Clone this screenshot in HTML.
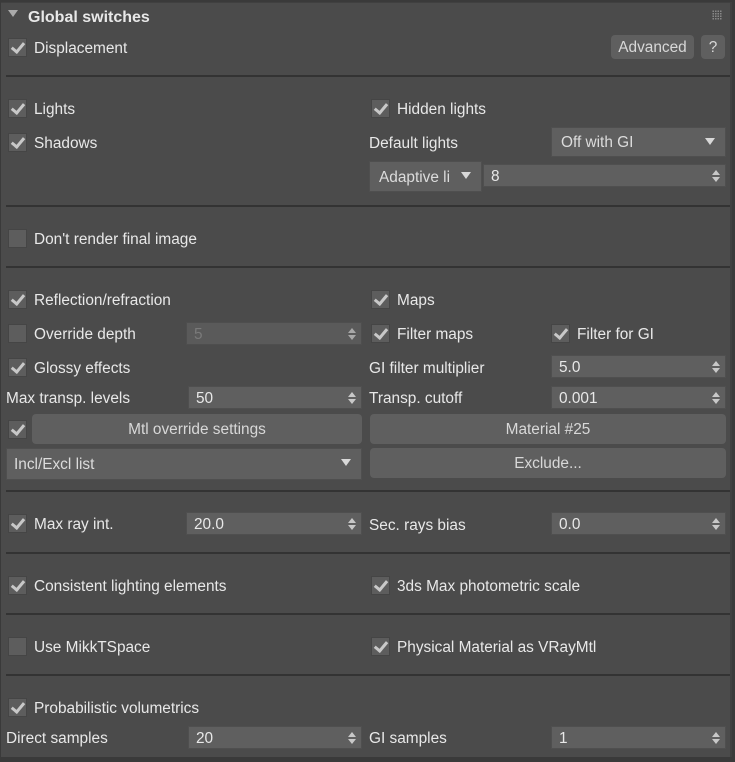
<!DOCTYPE html>
<html><head><meta charset="utf-8"><style>
*{box-sizing:border-box;margin:0;padding:0}
body{width:735px;height:762px;background:#3a3a3a;font-family:"Liberation Sans",sans-serif;font-size:15.4px;color:#e8e8e8;position:relative;overflow:hidden}
#p{position:absolute;left:1px;top:2px;width:731px;height:755px;background:#4b4b4b;border-top:1px solid #404040;border-right:2px solid #404040}
.a{position:absolute;white-space:nowrap;line-height:18px}
.t{position:absolute;white-space:nowrap;line-height:18px;margin-top:1px}
.cb{position:absolute;width:19px;height:19px;background:#5d5d5d;border:1px solid #454545}
.cb.c::after{content:"";position:absolute;left:5px;top:1px;width:5px;height:10px;border-right:3px solid #c8c8c8;border-bottom:3px solid #c8c8c8;transform:rotate(40deg)}
.sep{position:absolute;left:6px;width:724px;height:2px;background:#333}
.f{position:absolute;height:23px;background:#5f5f5f;border:1px solid #4f4f4f;padding-left:7px;padding-top:1px;line-height:21px}
.f.sp::after{content:"";position:absolute;right:5px;top:5px;width:0;height:0;border-left:4px solid transparent;border-right:4px solid transparent;border-bottom:5px solid #c8c8c8}
.f.sp::before{content:"";position:absolute;right:5px;top:12px;width:0;height:0;border-left:4px solid transparent;border-right:4px solid transparent;border-top:5px solid #c8c8c8}
.dd::after{content:"";position:absolute;right:10px;top:10px;border-left:5px solid transparent;border-right:5px solid transparent;border-top:7px solid #d8d8d8}
.b{position:absolute;background:#5f5f5f;border-radius:4px;text-align:center;color:#d8d8d8;padding-top:1px}
.dis{color:#8a8a8a}
</style></head><body>
<div id="p"></div>
<div class="a" style="left:8px;top:10px;width:0;height:0;border-left:5px solid transparent;border-right:5px solid transparent;border-top:7px solid #aaa"></div>
<div class="t" style="left:28px;top:8px;font-weight:bold;font-size:16px">Global switches</div>
<div class="a" style="left:712px;top:10px;width:10px;height:10px;background-image:radial-gradient(#888 40%,transparent 45%);background-size:2.5px 2.5px"></div>

<div class="cb c" style="left:8px;top:38px"></div><div class="t" style="left:34px;top:39px">Displacement</div>
<div class="b" style="left:611px;top:35px;width:83px;height:24px;line-height:24px">Advanced</div>
<div class="b" style="left:701px;top:35px;width:24px;height:24px;line-height:24px">?</div>
<div class="sep" style="top:75px"></div>

<div class="cb c" style="left:8px;top:99px"></div><div class="t" style="left:34px;top:100px">Lights</div>
<div class="cb c" style="left:371px;top:99px"></div><div class="t" style="left:397px;top:100px">Hidden lights</div>
<div class="cb c" style="left:8px;top:133px"></div><div class="t" style="left:34px;top:134px">Shadows</div>
<div class="t" style="left:369px;top:134px">Default lights</div>
<div class="f dd" style="left:551px;top:127px;width:175px;height:30px;line-height:28px;padding-left:9px;color:#dcdcdc">Off with GI</div>
<div class="f dd" style="left:369px;top:161px;width:113px;height:31px;line-height:29px;padding-left:9px;color:#dcdcdc">Adaptive li</div>
<div class="f sp" style="left:483px;top:164px;width:243px">8</div>
<div class="sep" style="top:205px"></div>

<div class="cb" style="left:8px;top:229px"></div><div class="t" style="left:34px;top:230px">Don't render final image</div>
<div class="sep" style="top:266px"></div>

<div class="cb c" style="left:8px;top:290px"></div><div class="t" style="left:34px;top:291px">Reflection/refraction</div>
<div class="cb c" style="left:371px;top:290px"></div><div class="t" style="left:397px;top:291px">Maps</div>
<div class="cb" style="left:8px;top:324px"></div><div class="t" style="left:34px;top:325px">Override depth</div>
<div class="f sp dis" style="left:186px;top:322px;width:176px;opacity:.75">5</div>
<div class="cb c" style="left:371px;top:324px"></div><div class="t" style="left:397px;top:325px">Filter maps</div>
<div class="cb c" style="left:551px;top:324px"></div><div class="t" style="left:577px;top:325px">Filter for GI</div>
<div class="cb c" style="left:8px;top:358px"></div><div class="t" style="left:34px;top:359px">Glossy effects</div>
<div class="t" style="left:369px;top:359px">GI filter multiplier</div>
<div class="f sp" style="left:551px;top:355px;width:175px">5.0</div>
<div class="t" style="left:6px;top:389px">Max transp. levels</div>
<div class="f sp" style="left:188px;top:386px;width:174px">50</div>
<div class="t" style="left:369px;top:389px">Transp. cutoff</div>
<div class="f sp" style="left:551px;top:386px;width:175px">0.001</div>
<div class="cb c" style="left:8px;top:420px"></div>
<div class="b" style="left:32px;top:414px;width:330px;height:30px;line-height:30px">Mtl override settings</div>
<div class="b" style="left:370px;top:414px;width:356px;height:30px;line-height:30px">Material #25</div>
<div class="f dd" style="left:6px;top:448px;width:356px;height:32px;line-height:30px;color:#dcdcdc">Incl/Excl list</div>
<div class="b" style="left:370px;top:448px;width:356px;height:30px;line-height:30px">Exclude...</div>
<div class="sep" style="top:490px"></div>

<div class="cb c" style="left:8px;top:514px"></div><div class="t" style="left:34px;top:515px">Max ray int.</div>
<div class="f sp" style="left:186px;top:512px;width:176px">20.0</div>
<div class="t" style="left:369px;top:516px">Sec. rays bias</div>
<div class="f sp" style="left:551px;top:512px;width:175px">0.0</div>
<div class="sep" style="top:552px"></div>

<div class="cb c" style="left:8px;top:576px"></div><div class="t" style="left:34px;top:577px">Consistent lighting elements</div>
<div class="cb c" style="left:371px;top:576px"></div><div class="t" style="left:397px;top:577px">3ds Max photometric scale</div>
<div class="sep" style="top:613px"></div>

<div class="cb" style="left:8px;top:637px"></div><div class="t" style="left:34px;top:638px">Use MikkTSpace</div>
<div class="cb c" style="left:371px;top:637px"></div><div class="t" style="left:397px;top:638px">Physical Material as VRayMtl</div>
<div class="sep" style="top:674px"></div>

<div class="cb c" style="left:8px;top:698px"></div><div class="t" style="left:34px;top:699px">Probabilistic volumetrics</div>
<div class="t" style="left:6px;top:729px">Direct samples</div>
<div class="f sp" style="left:188px;top:726px;width:174px">20</div>
<div class="t" style="left:369px;top:729px">GI samples</div>
<div class="f sp" style="left:551px;top:726px;width:175px">1</div>
</body></html>
